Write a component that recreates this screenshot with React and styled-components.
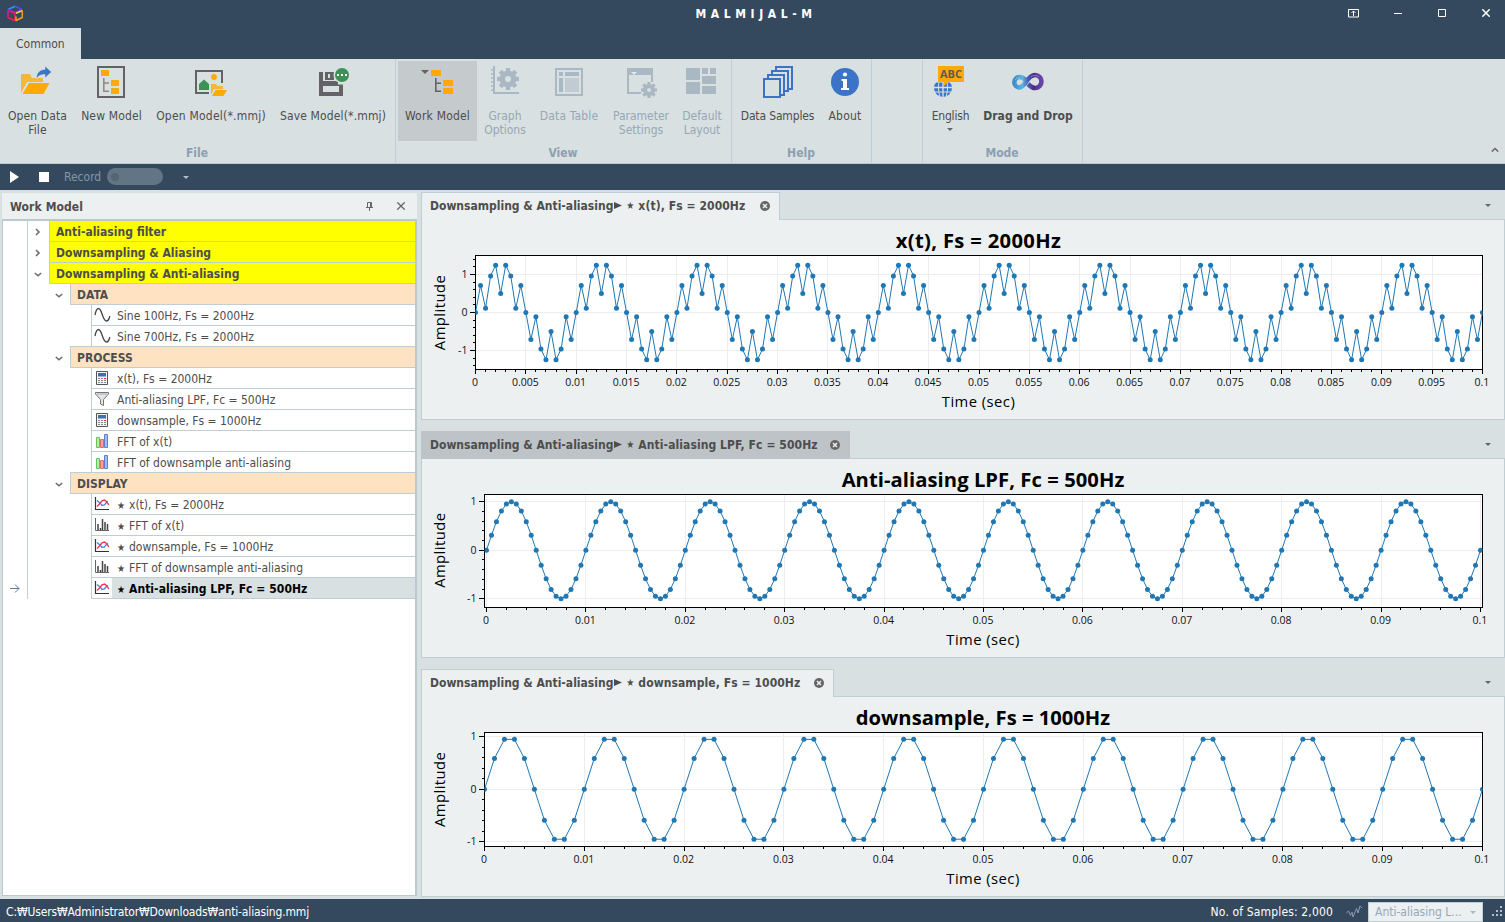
import React from 'react';
import styled, { createGlobalStyle } from 'styled-components';

const GlobalStyle = createGlobalStyle`
  * {
    box-sizing: border-box;
  }

  body {
    margin: 0;
    background: #d8e0e1;
    font-family: 'DejaVu Sans Condensed', 'Noto Sans', sans-serif;
    font-size: 12px;
    color: #4d4d4d;
    overflow: hidden;
  }

  svg {
    display: block;
    flex: none;
  }
`;

const Window = styled.div`
  display: flex;
  flex-direction: column;
  width: 1505px;
  height: 922px;
  background: #d8e0e1;
`;

const TitleBar = styled.header`
  display: grid;
  grid-template-columns: 200px 1fr 200px;
  align-items: center;
  height: 28px;
  padding: 0 0 2px 7px;
  background: #34495e;
`;

const AppTitle = styled.div`
  padding-top: 1px;
  color: #fff;
  font-weight: bold;
  letter-spacing: 4.6px;
  text-align: center;
`;

const WindowButtons = styled.div`
  display: flex;
  justify-content: flex-end;
`;

const WindowButton = styled.div`
  display: flex;
  justify-content: center;
  width: 44px;
  margin-right: ${(props) => (props.$last ? '-3px' : '0')};
`;

const RibbonTabs = styled.div`
  display: flex;
  height: 31px;
  background: #34495e;
`;

const RibbonTab = styled.div`
  width: 81px;
  padding-left: 16px;
  line-height: 32px;
  background: #d8e0e1;
`;

const Ribbon = styled.div`
  display: flex;
  height: 105px;
  border-bottom: 1px solid #b6cad0;
  background: #d8e0e1;
`;

const RibbonGroup = styled.section`
  display: flex;
  flex-direction: column;
  width: ${(props) => props.$width}px;
  padding: 2px 2px 0;
  border-right: 1px solid #bfced3;
`;

const GroupButtons = styled.div`
  display: flex;
  height: 80px;
`;

const GroupLabel = styled.div`
  padding: 5px 1px 0 0;
  color: #8c9fb3;
  font-weight: bold;
  line-height: 14px;
  text-align: center;
`;

const RibbonButton = styled.div`
  display: flex;
  flex: none;
  flex-direction: column;
  align-items: center;
  width: ${(props) => props.$width}px;
  padding-top: 5px;
  background: ${(props) => (props.$active ? '#c5cacd' : 'transparent')};
  color: ${(props) => (props.$disabled ? '#97a7b8' : '#4d4d4d')};

  /* keeps the 32px icon on whole pixels in odd-width buttons */
  > svg {
    margin-right: ${(props) => props.$width % 2}px;
  }
`;

const ButtonText = styled.div`
  margin-top: 11px;
  line-height: 14px;
  font-weight: ${(props) => (props.$bold ? 'bold' : 'normal')};
  letter-spacing: ${(props) => props.$spacing || 0}px;
  text-align: center;
  white-space: pre;
`;

const RibbonEnd = styled.div`
  display: flex;
  flex: 1;
  align-items: flex-end;
  justify-content: flex-end;
  padding: 0 6px 11px 0;
`;

const Toolbar = styled.div`
  display: flex;
  align-items: center;
  height: 26px;
  padding-left: 10px;
  background: #34495e;
  color: #8496a7;
`;

const Record = styled.span`
  margin: 0 6px 1px 15px;
`;

const Toggle = styled.div`
  display: flex;
  align-items: center;
  width: 56px;
  height: 17px;
  margin: 0 20px 1px 0;
  padding-left: 4px;
  border-radius: 9px;
  background: #627584;
`;

const Knob = styled.div`
  width: 8px;
  height: 8px;
  border-radius: 50%;
  background: #56656f;
`;

const Workspace = styled.main`
  display: flex;
  height: 709px;
`;

const SidePanel = styled.aside`
  display: flex;
  flex-direction: column;
  width: 415px;
  margin: 3px 4px 3px 2px;
`;

const PanelHeader = styled.div`
  display: flex;
  align-items: center;
  height: 26px;
  padding: 0 12px 0 8px;
  background: #ecf0f1;
  font-weight: bold;
`;

const PanelTitle = styled.div`
  flex: 1;
  padding-top: 1px;
  letter-spacing: 0.1px;
`;

const PinIcon = styled.span`
  margin-right: 24px;
`;

const Tree = styled.div`
  flex: 1;
  border: 1px solid #b8cace;
  border-top-width: 2px;
  border-right-width: 2px;
  background: #fff;
`;

const TreeRow = styled.div`
  display: flex;
  height: 21px;
`;

const RowMarker = styled.div`
  display: flex;
  align-items: center;
  width: 25px;
  padding-left: 7px;
  border-right: 1px solid #bfced3;
`;

const RowIndent = styled.div`
  width: ${(props) => props.$width}px;
`;

const Expander = styled.div`
  display: flex;
  align-items: center;
  justify-content: center;
  width: 21px;
  padding-right: 1px;
`;

// the rule under a row starts further left when the next row is less indented
const RowRule = styled.div`
  flex: 1;
  display: flex;
  position: relative;
  border-left: 1px solid #bfced3;
  border-bottom: 1px solid #bfced3;

  &::after {
    content: '';
    position: absolute;
    left: -${(props) => props.$overhang + 1}px;
    bottom: -1px;
    width: ${(props) => props.$overhang}px;
    height: 1px;
    background: #bfced3;
  }
`;

const RowIcon = styled.div`
  width: 20px;
  padding: 2px 0 0 2px;
`;

const rowColors = { root: '#ffff00', group: '#ffe2c2', item: '#fff' };

const RowLabel = styled.div`
  flex: 1;
  height: 20px;
  padding-left: ${(props) => (props.$kind === 'item' ? 5 : 6)}px;
  background: ${(props) => (props.$selected ? '#d8e0e1' : rowColors[props.$kind])};
  color: ${(props) => (props.$selected ? '#000' : '#4d4d4d')};
  font-weight: ${(props) => (props.$selected || props.$kind !== 'item' ? 'bold' : 'normal')};
  letter-spacing: ${(props) => (props.$selected ? 0.05 : 0)}px;
  line-height: 22px;
  white-space: pre;
`;

const Star = styled.span`
  display: inline-block;
  width: 12px;
  font-size: 10px;
  font-weight: normal;
  line-height: 10px;
  vertical-align: 0.5px;
`;

const Documents = styled.div`
  display: flex;
  flex-direction: column;
  gap: 11px;
  padding-top: 2px;
  width: 1084px;
`;

const Doc = styled.section`
  display: flex;
  flex-direction: column;
`;

const DocTabs = styled.div`
  display: flex;
  justify-content: space-between;
  height: 27px;
`;

const DocTab = styled.div`
  display: flex;
  align-items: center;
  justify-content: space-between;
  width: ${(props) => props.$width}px;
  height: 28px;
  padding: 0 9px 2px 8px;
  border: 1px solid ${(props) => (props.$active ? '#bdc3c7' : '#bfced3')};
  border-bottom: none;
  background: ${(props) => (props.$active ? '#bdc3c7' : '#ecf0f1')};
  font-weight: bold;
  white-space: pre;
  z-index: 1;
`;

const TabText = styled.div`
  display: flex;
  align-items: center;
`;

const TabTitle = styled.span`
  letter-spacing: 0.08px;
`;

const TabArrow = styled.span`
  display: inline-flex;
  margin: 0 4px 0 1px;
`;

const TabsMenu = styled.div`
  display: flex;
  align-items: center;
  padding-right: 14px;
`;

const DocBody = styled.div`
  height: ${(props) => props.$height}px;
  border: 1px solid #bfced3;
  background: #ecf0f1;
`;

const StatusBar = styled.footer`
  display: flex;
  align-items: center;
  height: 23px;
  padding: 2px 1px 0 6px;
  background: #34495e;
  color: #fff;
`;

const FilePath = styled.div`
  flex: 1;
  padding-top: 1px;
  letter-spacing: -0.15px;
`;

const SampleCount = styled.div`
  margin-right: 13px;
  padding-top: 1px;
  letter-spacing: 0.15px;
`;

const Combo = styled.div`
  display: flex;
  align-items: center;
  justify-content: space-between;
  width: 115px;
  height: 20px;
  margin: 0 9px 0 5px;
  padding: 1px 6px 0;
  border: 1px solid #bfced3;
  background: #ecf0f1;
  color: #97a7b8;
`;

const Caret = ({ color = '#666' }) => (
  <svg width="6" height="3" viewBox="0 0 6 3">
    <path d="M0 0h6L3 3z" fill={color} />
  </svg>
);

const Gear = ({ x, y, r, hole, color, bg }) => (
  <g transform={`translate(${x} ${y})`} fill={color}>
    {[0, 45, 90, 135].map((a) => (
      <rect key={a} x={-r * 0.2} y={-r} width={r * 0.4} height={r * 2} transform={`rotate(${a})`} />
    ))}
    <circle r={r * 0.76} />
    <circle r={hole} fill={bg} />
  </g>
);

const Icon = ({ children }) => (
  <svg width="32" height="32" viewBox="0 0 32 32">{children}</svg>
);

const OpenDataIcon = () => (
  <Icon>
    <path d="M0 8h9l2 4h11v4H6L0 27z" fill="#f6b53d" />
    <path d="M8 17h20.5l-6 11H1.500z" fill="#ffa908" />
    <path d="M15.500 13C15.500 6 19 3.500 24 3.500V0l6.500 6-6.500 6V8.500c-4 0-6.500 1-8.500 4.500z" fill="#3b74c6" stroke="#d8e0e1" strokeWidth=".6" />
  </Icon>
);

const NewModelIcon = () => (
  <Icon>
    <path d="M3 1h26v30H3z" fill="none" stroke="#636363" strokeWidth="2" />
    <path d="M6 4h8v6H6zM16 14h8v6h-8zM16 22h8v6h-8z" fill="#ffa908" />
    <path d="M8.800 12v13.200H14M8.800 17H14" fill="none" stroke="#888" strokeWidth="1.500" />
  </Icon>
);

const OpenModelIcon = () => (
  <Icon>
    <path d="M14 27H1V5h26v12" fill="none" stroke="#636363" strokeWidth="2" />
    <circle cx="19" cy="11" r="3" fill="#ffa908" />
    <path d="M4 24v-6l5-4.500 5 4.500v6z" fill="#3c9256" />
    <path d="M16 18h5l1.500 2H28v3H19l-3 6z" fill="#f6b53d" />
    <path d="M20.500 24H32l-3.500 6H17z" fill="#ffa908" />
  </Icon>
);

const SaveModelIcon = () => (
  <Icon>
    <path d="M2 6h4v9h15v3.500h5V30H2z" fill="#636363" />
    <path d="M6 20h16v6H6z" fill="#d8e0e1" />
    <path d="M8 6h9v8H8z" fill="#636363" />
    <path d="M11 8h2v4h-2z" fill="#d8e0e1" />
    <circle cx="25" cy="9" r="8.500" fill="#d8e0e1" />
    <circle cx="25" cy="9" r="7" fill="#3c9256" />
    <path d="M20 8h2v2h-2zM24 8h2v2h-2zM28 8h2v2h-2z" fill="#fff" />
  </Icon>
);

const WorkModelIcon = () => (
  <Icon>
    <path d="M0 4h8L4 8z" fill="#636363" />
    <path d="M10 4h10v6H10zM22 14h10v6H22zM22 22h10v6H22z" fill="#ffa908" />
    <path d="M14.800 12v13.200H20M14.800 17.200H20" fill="none" stroke="#636363" strokeWidth="1.600" />
  </Icon>
);

const dim = '#aab8c4';

const GraphOptionsIcon = () => (
  <Icon>
    <path d="M5 0v27h25" fill="none" stroke={dim} strokeWidth="2" />
    <path d="M2 4h2M2 8h2M2 12h2M2 16h2M2 20h2M2 24h2" stroke={dim} strokeWidth="1.400" />
    <Gear x={19} y={13} r={11} hole={3} color={dim} bg="#d8e0e1" />
  </Icon>
);

const DataTableIcon = () => (
  <Icon>
    <path d="M3 3h26v26H3z" fill="none" stroke={dim} strokeWidth="2" />
    <path d="M6 6h4v4H6zM12 6h14v4H12zM6 12h4v14H6z" fill={dim} />
    <path d="M12 12h14v14H12z" fill="#c2cad2" />
  </Icon>
);

const ParameterIcon = () => (
  <Icon>
    <path d="M3 3h24v24H3z" fill="none" stroke={dim} strokeWidth="2" />
    <path d="M2 2h26v7H2z" fill={dim} />
    <path d="M6 6h6l-3 3z" fill="#e4eaec" />
    <path d="M16 16h14v13H16z" fill="#d8e0e1" />
    <Gear x={24} y={24} r={8} hole={2} color={dim} bg="#d8e0e1" />
  </Icon>
);

const LayoutIcon = () => (
  <Icon>
    <path d="M0 2h14v12H0zM16 2h6v6h-6zM24 2h6v6h-6zM16 10h14v8H16zM0 16h14v12H0zM16 20h14v8H16z" fill={dim} />
  </Icon>
);

const SamplesIcon = () => (
  <Icon>
    <g fill="#d8e0e1" stroke="#3b74c6" strokeWidth="2">
      <path d="M15 1h16v22H15z" />
      <path d="M11 5h16v20H11z" />
      <path d="M7 9h16v20H7z" />
      <path d="M3 13h16v18H3z" />
    </g>
  </Icon>
);

const AboutIcon = () => (
  <Icon>
    <circle cx="16" cy="16" r="14" fill="#3b74c6" />
    <circle cx="16" cy="8.500" r="2.100" fill="#fff" />
    <path d="M12.500 13H18v9h2v2h-8v-2h2v-7h-1.500z" fill="#fff" />
  </Icon>
);

const LanguageIcon = () => (
  <Icon>
    <circle cx="9" cy="22" r="9" fill="#3b74c6" />
    <path d="M0 21.500h18M9 12v20" fill="none" stroke="#d8e0e1" strokeWidth="1.400" />
    <path d="M0 26h18M5.500 13c-1.500 6-1.500 12 .5 18M12.500 13c1.500 6 1.500 12-.5 18" fill="none" stroke="#d8e0e1" />
    <path d="M0 12h18v4.500H0z" fill="#d8e0e1" />
    <path d="M4 0h26v16H14.500L10 20v-4H4z" fill="#ffa908" />
    <text x="17" y="12" textAnchor="middle" fontFamily="Open Sans, sans-serif" fontWeight="bold" fontSize="11" textLength="22" fill="#5f5a4c">ABC</text>
  </Icon>
);

const DragDropIcon = () => (
  <Icon>
    <defs>
      <linearGradient id="loop" x1="0" x2="1">
        <stop offset="0" stopColor="#3f8fc8" />
        <stop offset=".3" stopColor="#5cb6e6" />
        <stop offset=".5" stopColor="#4a5fb4" />
        <stop offset=".7" stopColor="#4d2c8c" />
        <stop offset="1" stopColor="#6a45a8" />
      </linearGradient>
    </defs>
    <path
      d="M14 14.500C11.500 11.500 9.500 11 7.500 11a5.200 5.200 0 1 0 0 10.400c5.500 0 7.500-12.400 15.500-12.400a6.500 6.500 0 1 1 0 13c-3 0-4.500-1.500-7-4"
      fill="none"
      stroke="url(#loop)"
      strokeWidth="4.600"
    />
    <path d="M3 14c1-2 3-2.500 5-2M19 11c2-2 6-2 8 0" fill="none" stroke="#a9d4f0" strokeOpacity=".6" strokeWidth=".8" />
  </Icon>
);

const CubeIcon = () => (
  <svg width="17" height="17" viewBox="0 0 17 17" fill="none" strokeWidth="1.500" strokeLinejoin="round">
    <path d="M1 4.500 8 1.200" stroke="#1fa0f5" />
    <path d="M8 1.200 15 4.500" stroke="#5b4bf0" />
    <path d="M1 4.500 8 7.500l7-3" stroke="#7a2ff0" />
    <path d="M1 5v7.500" stroke="#e316b4" />
    <path d="M1 12.500 8 15.800M8 8v7.500M2.500 6l5 2.200" stroke="#f0204a" />
    <path d="M9 8.300 15.300 5.500" stroke="#f4dd2a" />
    <path d="M15.300 5.500v7L9 15.500v-4" stroke="#f59a23" />
  </svg>
);

const SineIcon = () => (
  <svg width="17" height="16" viewBox="0 0 17 16">
    <path d="M1 8C2 3 3 1.500 4.500 1.500c3.500 0 4 12.500 8 12.500 1.500 0 2.500-1.500 3.300-5" fill="none" stroke="#444" strokeWidth="1.300" />
  </svg>
);

const CalcIcon = () => (
  <svg width="17" height="16" viewBox="0 0 17 16">
    <path d="M2.500 1.500h11v13h-11z" fill="#f4f4f4" stroke="#555" />
    <path d="M4 3h8v3.500H4z" fill="#3f6fb0" />
    <path d="M4 8.500h2M7 8.500h2M4 10.500h2M7 10.500h2M4 12.500h2M7 12.500h2M10 12.500h2M10 10.500h2" stroke="#888" />
    <path d="M10 8.500h2" stroke="#e03030" />
  </svg>
);

const FilterIcon = () => (
  <svg width="17" height="16" viewBox="0 0 17 16">
    <path d="M1.500 1.500h13v1.500L9.500 8.500v6l-3-1.500V8.500l-5-5.500z" fill="#e4e4e4" stroke="#777" />
    <path d="M3 3h10" stroke="#aaa" />
  </svg>
);

const FftIcon = () => (
  <svg width="17" height="16" viewBox="0 0 17 16">
    <path d="M2.500 4.500h3v10h-3z" fill="#b4ecaa" stroke="#6cc05c" />
    <path d="M6.500 6.500h3v8h-3z" fill="#f4a0a0" stroke="#d87070" />
    <path d="M10.500 1.500h3v13h-3z" fill="#a4baf4" stroke="#5f7fd0" />
  </svg>
);

const CurveIcon = () => (
  <svg width="17" height="16" viewBox="0 0 17 16">
    <path d="M1.500 1v12.500H15" fill="none" stroke="#333" strokeWidth="1.200" />
    <path d="M3 4.500 7 8l1 1.500L10.500 9l3-4" fill="none" stroke="#4a80f0" strokeWidth="1.300" />
    <path d="M3 10.500 5.500 8 8 4.800l2.500-.8L13 6l1.800 3" fill="none" stroke="#f03848" strokeWidth="1.400" />
  </svg>
);

const BarsIcon = () => (
  <svg width="17" height="16" viewBox="0 0 17 16">
    <path d="M1.500 1v12.500H15" fill="none" stroke="#666" />
    <path d="M4 7v6M6.500 11v2M8.500 2v11M11 5v8M13.500 7v6" stroke="#444" strokeWidth="1.500" />
  </svg>
);

const ArrowIcon = () => (
  <svg width="10" height="9" viewBox="0 0 10 9" fill="none" stroke="#5d7a92">
    <path d="M0 4.500h9M5 .5l4 4-4 4" />
  </svg>
);

const TabCloseIcon = () => (
  <svg width="10" height="10" viewBox="0 0 10 10">
    <circle cx="5" cy="5" r="5" fill="#666" />
    <path d="m3 3 4 4m0-4L3 7" stroke="#ecf0f1" strokeWidth="1.500" />
  </svg>
);

const WaveIcon = () => (
  <svg width="17" height="14" viewBox="0 0 17 14">
    <path d="M.3 8l2.200-2 2 4.500L6 7l1 5 3.500-8.500L12 8l2-7 2 2" fill="none" stroke="#8b9bac" />
  </svg>
);

const rowIcons = {
  sine: SineIcon,
  calc: CalcIcon,
  filter: FilterIcon,
  fft: FftIcon,
  curve: CurveIcon,
  bars: BarsIcon,
};

const ribbonGroups = [
  {
    label: 'File',
    width: 396,
    buttons: [
      { text: 'Open Data\nFile', icon: OpenDataIcon, width: 71, spacing: 0.1 },
      { text: 'New Model', icon: NewModelIcon, width: 77, spacing: 0.15 },
      { text: 'Open Model(*.mmj)', icon: OpenModelIcon, width: 122, spacing: 0.22 },
      { text: 'Save Model(*.mmj)', icon: SaveModelIcon, width: 122, spacing: 0.15 },
    ],
  },
  {
    label: 'View',
    width: 336,
    buttons: [
      { text: 'Work Model', icon: WorkModelIcon, width: 79, active: true, spacing: 0.2 },
      { text: 'Graph\nOptions', icon: GraphOptionsIcon, width: 56, disabled: true },
      { text: 'Data Table', icon: DataTableIcon, width: 72, disabled: true, spacing: 0.15 },
      { text: 'Parameter\nSettings', icon: ParameterIcon, width: 72, disabled: true },
      { text: 'Default\nLayout', icon: LayoutIcon, width: 50, disabled: true },
    ],
  },
  {
    label: 'Help',
    width: 140,
    buttons: [
      { text: 'Data Samples', icon: SamplesIcon, width: 87, spacing: -0.15 },
      { text: 'About', icon: AboutIcon, width: 48, spacing: 0.2 },
    ],
  },
  { label: '', width: 51, buttons: [] },
  {
    label: 'Mode',
    width: 160,
    buttons: [
      { text: 'English', icon: LanguageIcon, width: 51, caret: true, spacing: -0.2 },
      { text: 'Drag and Drop', icon: DragDropIcon, width: 104, bold: true, spacing: 0.05 },
    ],
  },
];

const treeRows = [
  { kind: 'root', text: 'Anti-aliasing filter' },
  { kind: 'root', text: 'Downsampling & Aliasing' },
  { kind: 'root', text: 'Downsampling & Anti-aliasing', open: true },
  { kind: 'group', text: 'DATA' },
  { kind: 'item', icon: 'sine', text: 'Sine 100Hz, Fs = 2000Hz' },
  { kind: 'item', icon: 'sine', text: 'Sine 700Hz, Fs = 2000Hz' },
  { kind: 'group', text: 'PROCESS' },
  { kind: 'item', icon: 'calc', text: 'x(t), Fs = 2000Hz' },
  { kind: 'item', icon: 'filter', text: 'Anti-aliasing LPF, Fc = 500Hz' },
  { kind: 'item', icon: 'calc', text: 'downsample, Fs = 1000Hz' },
  { kind: 'item', icon: 'fft', text: 'FFT of x(t)' },
  { kind: 'item', icon: 'fft', text: 'FFT of downsample anti-aliasing' },
  { kind: 'group', text: 'DISPLAY' },
  { kind: 'item', icon: 'curve', star: true, text: 'x(t), Fs = 2000Hz' },
  { kind: 'item', icon: 'bars', star: true, text: 'FFT of x(t)' },
  { kind: 'item', icon: 'curve', star: true, text: 'downsample, Fs = 1000Hz' },
  { kind: 'item', icon: 'bars', star: true, text: 'FFT of downsample anti-aliasing' },
  { kind: 'item', icon: 'curve', star: true, text: 'Anti-aliasing LPF, Fc = 500Hz', selected: true },
];

const sine = (hz, t) => Math.sin(2 * Math.PI * hz * t);

const charts = [
  {
    title: 'x(t), Fs = 2000Hz',
    titleSpacing: 0.33,
    tabWidth: 359,
    height: 201,
    plot: { left: 53.5, right: 1060.5, top: 35.5, bottom: 149.5 },
    x0: 53.5,
    x1: 1060.5,
    zero: 92.5,
    unit: 38,
    step: 0.005,
    rate: 2000,
    fn: (t) => sine(100, t) + 0.5 * sine(700, t),
  },
  {
    title: 'Anti-aliasing LPF, Fc = 500Hz',
    titleSpacing: 0.06,
    tabWidth: 429,
    height: 200,
    active: true,
    plot: { left: 62.5, right: 1060.5, top: 35.5, bottom: 148.5 },
    x0: 64.5,
    x1: 1058.5,
    zero: 91.2,
    unit: 48.5,
    step: 0.01,
    rate: 2000,
    fn: (t) => sine(100, t),
  },
  {
    title: 'downsample, Fs = 1000Hz',
    titleSpacing: 0,
    tabWidth: 413,
    height: 201,
    plot: { left: 62.5, right: 1060.5, top: 35.5, bottom: 149.5 },
    x0: 62.5,
    x1: 1060.5,
    zero: 92.3,
    unit: 52.5,
    step: 0.01,
    rate: 1000,
    fn: (t) => sine(100, t),
  },
];

const snap = (v) => Math.floor(v) + 0.5;

function Chart({ chart, id }) {
  const { plot, x0, x1, zero, unit, step, rate, fn, height } = chart;
  const toX = (t) => x0 + (t / 0.1) * (x1 - x0);
  const toY = (v) => zero - v * unit;

  const points = [];
  for (let i = 0; i <= rate * 0.1; i++) {
    points.push([toX(i / rate), toY(fn(i / rate))]);
  }

  const xTicks = [];
  for (let i = 0; i <= Math.round(0.5 / step); i++) {
    xTicks.push({ value: (i * step) / 5, major: i % 5 === 0 });
  }

  const yTicks = [];
  for (let i = -7; i <= 7; i++) {
    const y = toY(i / 5);
    if (y > plot.top && y < plot.bottom) {
      yTicks.push({ value: i / 5, major: i % 5 === 0 });
    }
  }

  const middle = (plot.left + plot.right) / 2 - 0.5;
  const w = plot.right - plot.left;
  const h = plot.bottom - plot.top;

  return (
    <svg width="1082" height={height - 2} fontFamily="'Open Sans', 'Noto Sans', sans-serif">
      <clipPath id={id}>
        <rect x={plot.left} y={plot.top} width={w} height={h} />
      </clipPath>
      <rect x={plot.left} y={plot.top} width={w} height={h} fill="#fff" />
      {xTicks.filter((t) => t.major).map((t) => (
        <path key={t.value} d={`M${snap(toX(t.value))} ${plot.top}V${plot.bottom}`} stroke="#ededed" />
      ))}
      {yTicks.filter((t) => t.major).map((t) => (
        <path key={t.value} d={`M${plot.left} ${snap(toY(t.value))}H${plot.right}`} stroke="#ededed" />
      ))}
      <rect x={plot.left} y={plot.top} width={w} height={h} fill="none" stroke="#000" />
      {xTicks.map((t) => (
        <path key={t.value} d={`M${snap(toX(t.value))} ${plot.bottom}v${t.major ? 4.5 : 2.5}`} stroke="#000" />
      ))}
      {yTicks.map((t) => (
        <path key={t.value} d={`M${plot.left} ${snap(toY(t.value))}h${t.major ? -5.5 : -2.5}`} stroke="#000" />
      ))}
      <g clipPath={`url(#${id})`}>
        <polyline points={points.map((p) => p.join(',')).join(' ')} fill="none" stroke="#1f77b4" />
        {points.map(([x, y]) => (
          <circle key={x} cx={x} cy={y} r="2.5" fill="#1f77b4" />
        ))}
      </g>
      <g fontSize="10.500" fill="#111">
        {xTicks.filter((t) => t.major).map((t) => (
          <text key={t.value} x={toX(t.value) - 0.5} y={plot.bottom + 16.5} textAnchor="middle">
            {Number(t.value.toFixed(3))}
          </text>
        ))}
        {yTicks.filter((t) => t.major).map((t) => (
          <text key={t.value} x={plot.left - 8} y={toY(t.value) + 3.5} textAnchor="end">{t.value}</text>
        ))}
      </g>
      <text x={middle} y="28" textAnchor="middle" fontSize="20.200" fontWeight="bold" letterSpacing={chart.titleSpacing}>
        {chart.title}
      </text>
      <g fontSize="14.800" letterSpacing=".45">
        <text x={middle} y={plot.bottom + 37.5} textAnchor="middle">Time (sec)</text>
        <text transform={`translate(23 ${zero}) rotate(-90)`} textAnchor="middle">Amplitude</text>
      </g>
    </svg>
  );
}

const levels = { root: 0, group: 1, item: 2 };

function WorkTree() {
  return (
    <Tree>
      {treeRows.map((row, i) => {
        const level = levels[row.kind];
        const next = treeRows[i + 1] ? levels[treeRows[i + 1].kind] : level;
        const RowGlyph = rowIcons[row.icon];
        return (
          <TreeRow key={i}>
            <RowMarker>{row.selected && <ArrowIcon />}</RowMarker>
            <RowIndent $width={level * 21} />
            <Expander>
              {row.kind !== 'item' && (
                <svg width="8" height="8" viewBox="0 0 8 8" fill="none" stroke="#6c6c6c" strokeWidth="1.600">
                  {row.kind === 'root' && !row.open ? <path d="m2 1 3 3-3 3" /> : <path d="m.8 3 3.200 2.800L7.200 3" />}
                </svg>
              )}
            </Expander>
            <RowRule $overhang={Math.max(0, level - next) * 21}>
              {RowGlyph && <RowIcon><RowGlyph /></RowIcon>}
              <RowLabel $kind={row.kind} $selected={row.selected}>
                {row.star && <Star>★</Star>}
                {row.text}
              </RowLabel>
            </RowRule>
          </TreeRow>
        );
      })}
    </Tree>
  );
}

export default function App() {
  return (
    <Window>
      <GlobalStyle />
      <TitleBar>
        <CubeIcon />
        <AppTitle>MALMIJAL-M</AppTitle>
        <WindowButtons>
          <WindowButton>
            <svg width="12" height="9" viewBox="0 0 12 9" fill="none" stroke="#fff">
              <path d="M.5.5h10v7.500H.5zM5.500 2v5M3.500 4l2-2 2 2" />
            </svg>
          </WindowButton>
          <WindowButton>
            <svg width="8" height="9" viewBox="0 0 8 9" stroke="#fff"><path d="M0 4.500h8" /></svg>
          </WindowButton>
          <WindowButton>
            <svg width="8" height="8" viewBox="0 0 8 8" fill="none" stroke="#fff"><path d="M.5.500h7v7h-7z" /></svg>
          </WindowButton>
          <WindowButton $last>
            <svg width="8" height="8" viewBox="0 0 8 8" stroke="#fff" strokeWidth="1.500"><path d="m.3.300 7.400 7.400m0-7.400L.3 7.700" /></svg>
          </WindowButton>
        </WindowButtons>
      </TitleBar>
      <RibbonTabs>
        <RibbonTab>Common</RibbonTab>
      </RibbonTabs>
      <Ribbon>
        {ribbonGroups.map((group, i) => (
          <RibbonGroup key={i} $width={group.width}>
            <GroupButtons>
              {group.buttons.map((b) => (
                <RibbonButton key={b.text} $width={b.width} $active={b.active} $disabled={b.disabled}>
                  <b.icon />
                  <ButtonText $bold={b.bold} $spacing={b.spacing}>{b.text}</ButtonText>
                  {b.caret && <svg width="6" height="9" viewBox="0 0 6 9"><path d="M0 5h6L3 8z" fill="#666" /></svg>}
                </RibbonButton>
              ))}
            </GroupButtons>
            <GroupLabel>{group.label}</GroupLabel>
          </RibbonGroup>
        ))}
        <RibbonEnd>
          <svg width="8" height="5" viewBox="0 0 8 5" fill="none" stroke="#666" strokeWidth="1.500">
            <path d="M.8 4.500 4 1.500l3.200 3" />
          </svg>
        </RibbonEnd>
      </Ribbon>
      <Toolbar>
        <svg width="39" height="12" viewBox="0 0 39 12" fill="#fff">
          <path d="M0 0l9 6-9 6zM29 1h10v10H29z" />
        </svg>
        <Record>Record</Record>
        <Toggle><Knob /></Toggle>
        <Caret color="#b4bec8" />
      </Toolbar>
      <Workspace>
        <SidePanel>
          <PanelHeader>
            <PanelTitle>Work Model</PanelTitle>
            <PinIcon>
              <svg width="7" height="9" viewBox="0 0 7 9" fill="none" stroke="#666">
                <path d="M1.500 5.500v-5h4v5M0 5.500h7M3.500 6v3M4.500 1v4" />
              </svg>
            </PinIcon>
            <svg width="8" height="8" viewBox="0 0 8 8" stroke="#666" strokeWidth="1.300">
              <path d="m.3.300 7.400 7.400m0-7.400L.3 7.700" />
            </svg>
          </PanelHeader>
          <WorkTree />
        </SidePanel>
        <Documents>
          {charts.map((chart, i) => (
            <Doc key={chart.title}>
              <DocTabs>
                <DocTab $width={chart.tabWidth} $active={chart.active}>
                  <TabText>
                    Downsampling &amp; Anti-aliasing
                    <TabArrow>
                      <svg width="8" height="7" viewBox="0 0 8 7"><path d="M0 0l8 3.500L0 7z" fill="#4d4d4d" /></svg>
                    </TabArrow>
                    <Star>★</Star>
                    <TabTitle>{chart.title}</TabTitle>
                  </TabText>
                  <TabCloseIcon />
                </DocTab>
                <TabsMenu><Caret /></TabsMenu>
              </DocTabs>
              <DocBody $height={chart.height}>
                <Chart chart={chart} id={`plot-${i}`} />
              </DocBody>
            </Doc>
          ))}
        </Documents>
      </Workspace>
      <StatusBar>
        <FilePath>C:₩Users₩Administrator₩Downloads₩anti-aliasing.mmj</FilePath>
        <SampleCount>No. of Samples: 2,000</SampleCount>
        <WaveIcon />
        <Combo>
          Anti-aliasing L...
          <Caret color="#a9b5bf" />
        </Combo>
        <svg width="12" height="12" viewBox="0 0 12 12" fill="#b4bec8">
          <path d="M8 0h2v2H8zM4 4h2v2H4zM8 4h2v2H8zM0 8h2v2H0zM4 8h2v2H4zM8 8h2v2H8z" />
        </svg>
      </StatusBar>
    </Window>
  );
}
